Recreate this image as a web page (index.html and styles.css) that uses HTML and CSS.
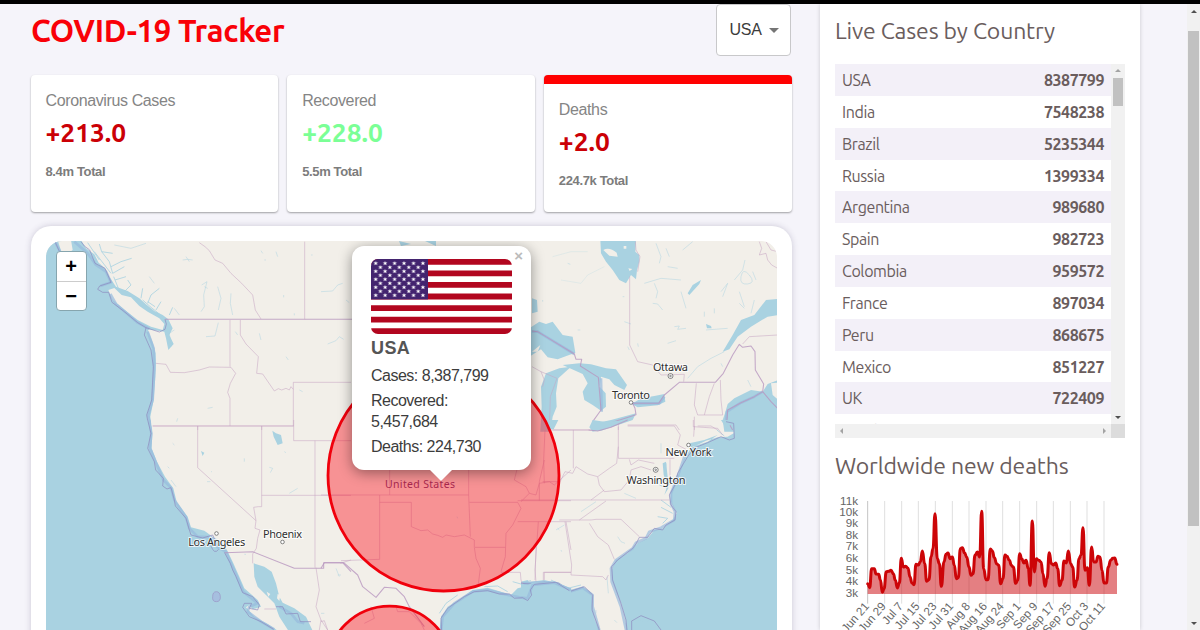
FILE: index.html
```html
<!DOCTYPE html>
<html lang="en">
<head>
<meta charset="utf-8">
<title>COVID-19 Tracker</title>
<link rel="stylesheet" href="styles.css">
</head>
<body>
<div class="app">
  <main class="left">
    <header class="header">
      <h1>COVID-19 Tracker</h1>
      <div class="select">USA <span class="caret"></span></div>
    </header>
    <section class="stats">
      <div class="stat"><p class="label">Coronavirus Cases</p><h2>+213.0</h2><p class="total">8.4m Total</p></div>
      <div class="stat"><p class="label">Recovered</p><h2 class="green">+228.0</h2><p class="total">5.5m Total</p></div>
      <div class="stat selected"><p class="label">Deaths</p><h2>+2.0</h2><p class="total">224.7k Total</p></div>
    </section>
    <section class="map-card">
      <div class="map">
        <svg class="tiles" viewBox="45 241 732 389" width="732" height="389">
          <rect x="45" y="241" width="732" height="389" fill="#f2efe9"/>
          <!-- Pacific north-west -->
          <g transform="translate(30 220) scale(.33333)">
            <path class="water" d="M45 60H150L165 85 190 103 203 128 222 145 235 170 245 185 255 200 290 213 325 235 345 253 370 273 395 285 412 298 425 325 415 345 428 372 412 390 405 355 400 335 350 328 366 370 374 400 375 430 373 470 368 540 358 590 362 635H45Z"/>
            <path class="land" d="M80 60H120L125 90 112 100 92 98ZM232 210 250 204 272 225 300 232 325 258 350 275 385 295 400 312 395 330 360 320 320 300 275 265 245 240Z"/>
            <path class="stream" stroke-width="7" d="M170 68 205 120M190 95 240 160M248 170 262 205M335 240 360 262 395 290M350 245 372 260"/>
            <path class="stream" d="M205 72 212 95 235 125 245 160M212 95 245 100M240 140 270 125 302 115M245 160 280 140M252 180 285 170M280 215 300 195 290 180M330 235 335 205M350 250 360 225 385 205M375 270 390 245M415 285 425 262"/>
            <path class="creek" d="M250 75 300 85 345 70M455 120 470 118 485 120M465 110 475 125M512 195 528 185 518 225 520 260 510 275M520 200 530 205M560 200 570 235 562 270M600 220 598 250 605 285M355 170 370 190M430 265 445 285M870 215 905 213 920 195 935 190M890 372 915 362 925 350 938 358M525 350 552 348 562 308M685 340 690 360M613 335 620 345M530 565 545 562M440 595 437 605M805 510 815 515M765 410 772 420M735 95 740 110M690 92 695 100M430 330 415 340 420 380M945 240 955 248M758 225V232M790 280V286M700 120H705M840 105H845"/>
            <path class="shelf" d="M72 65 90 100 110 110M130 65 170 100 195 135 225 155 240 187 208 198M238 222 255 252 320 308 355 327M350 335 368 385 370 450 365 540 352 585 358 630"/>
            <path class="edge" d="M72 65 86 96M150 65 160 78 176 90 192 130 222 145 240 187 206 198 200 208 215 217 233 217 243 247 280 275 320 308 345 323 385 336 402 328 406 312 402 298M345 323 340 345 360 390 367 440 362 540 347 585 355 630"/>
            <path class="border main" d="M402 298H970"/>
            <path class="border" d="M505 68 522 80 535 92 552 120 575 130 600 160 632 190 665 225 673 270 690 297M821 65V298M597 300V440M375 430 405 433 418 457 460 458 505 450 535 441 600 442 614 460 598 490 590 517 597 535V618M628 300V345L645 372 682 410 677 460 695 462 730 513 742 506 752 510 765 505 775 510 780 500 787 508M960 487H787V618M365 618H788M500 618V630M692 618V630"/>
          </g>
          <!-- Pacific south-west and Baja -->
          <g transform="translate(30 420) scale(.33333)">
            <path class="water" d="M45 0H357L364 40 362 85 378 125 402 170 427 205 437 245 470 290 480 322 520 332 545 350 570 365 588 390 605 425 625 470 640 505 680 540 690 560 665 568 655 555 645 562 670 590 710 612 740 632H45ZM668 430 700 440 722 455 735 490 745 530 755 548 790 565 825 590 845 632H772L745 590 730 550 705 525 680 500 670 470Z"/>
            <path class="land" d="M740 522 748 525 745 543 738 535ZM707 515 718 522 712 530Z"/>
            <path class="shelf" d="M355 0 361 40 357 85 375 128 397 180 420 203 430 240 465 292 475 325 500 350 540 352 560 382 585 395 600 430 620 475 637 515 680 550 655 560 650 575 690 605 730 628M745 560 780 580 800 605 820 610"/>
            <path class="edge" d="M350 0 360 40 350 85 370 125 374 150 397 175 395 198 408 207 420 203 430 240 433 258 465 295 475 330 480 345 515 354 545 345 552 360M540 378Q550 405 563 388M580 397 598 430 605 450 615 470 635 518 665 530 685 555 680 570 655 565 662 550 640 550 635 562 655 590 690 605 728 628M735 560 755 560 765 582 800 580 808 605 840 605"/>
            <path d="M545 530Q545 515 556 515T568 530 556 545 545 530Z" fill="#a6bfdf" stroke="#9a92c4" stroke-width="2"/>
            <path class="creek" d="M410 140 415 145M420 180 435 200M425 70 430 75M640 115V125M715 142 725 145 718 158M775 220 800 205M760 95 765 98M915 445 925 470M640 403H645M540 155H543M528 185H538"/>
            <path class="water" d="M724 32 735 40 750 45 755 70 740 75 728 50ZM510 93 520 98 515 108Z"/>
            <path class="border main" d="M582 398 665 395 790 445H878V428H935L960 455"/>
            <path class="border" d="M365 18H788M500 18V143L675 302M692 18V260H682L668 262 675 302 672 325 687 330 680 355 676 385 665 402M788 0V62H960M852 62V443M692 226H960M855 443 865 510 855 560 870 600 865 630M870 605 880 602 890 630M700 567H735M928 430 960 420M665 402V430"/>
          </g>
          <!-- Great Lakes, eastern Canada -->
          <g transform="translate(520 220) scale(.33333)">
            <path class="water" d="M238 60H345L343 95 355 105 355 125 348 150 345 178 330 165 315 190 295 180 275 150 255 125 240 100ZM25 325 55 305 75 312 95 305 125 345 155 350 163 398 130 410 110 418 80 412 60 388 25 410ZM60 500 75 460 115 445 150 440 112 475 105 520 107 560 95 590 88 635H58L62 560ZM125 435 175 430 210 433 255 445 285 448 318 495 310 510 280 495 265 478 240 470 236 500 254 520 255 560 240 572 215 555 190 540 185 515 200 490 185 462ZM332 552 360 535 400 528 430 522 433 545 410 556 350 562ZM210 625 225 610 270 600 345 580 335 600 300 612 240 632 215 632ZM770 237 735 240 700 285 660 300 635 345 605 395 625 388 650 350 690 320 740 290 772 285V237ZM772 480 740 492 725 515 690 510 640 535 620 552 612 580 605 600 610 635H772ZM33 235 48 240 50 275 33 280ZM500 220 515 195 540 180 535 192 505 225ZM555 312 570 318 572 325 558 325Z"/>
            <path class="land" d="M247 90Q265 80 287 98L290 110 265 107ZM750 490 772 488V540L755 525ZM33 395 58 375 50 395ZM308 78h8v8h-8ZM322 145l12 2-8 6Z"/>
            <path class="creek" d="M405 70 420 110 415 130M400 190 410 215 405 235M440 140 470 145M460 320 475 318 470 328 495 325M310 305 330 312M395 250 410 252 425 270M600 215 620 190 605 230M655 215 670 260M660 170Q655 195 680 192T685 165 660 170M695 155 705 180M610 395 570 415 530 440 500 475M370 190 420 175 480 180M555 330 620 325M485 90 515 65M480 215 495 265M435 85 445 110M655 250 670 265M700 240 690 280M65 240V245M140 130 148 133M320 380 325 390M170 330H178M305 230H310M550 275V290M580 265V280M440 370 465 362M640 180 665 150 672 120M350 370 352 380M680 480 690 500M600 430 605 440"/>
            <path class="creek faint" d="M250 140 200 165 180 190 120 180M95 110 150 95 200 95"/>
            <path class="shelf" stroke-width="4" d="M33 335 50 335 160 402M240 475 242 575M335 550H415L430 530M615 600 618 575 660 548 700 530 725 515"/>
            <path class="border main" d="M33 333 50 335 160 402 165 418 182 418 178 438 232 472 240 570 215 605 220 627 270 608 345 584 342 565 335 550H413L430 525 475 487H583L607 460 635 405 655 373 665 382 690 378 702 395 703 450 728 492 725 515 700 530 660 548 620 570 618 600 635 630M725 515 750 545 770 565"/>
            <path class="border" d="M715 65 722 85 715 105 735 100 740 120 752 135 770 145M735 65 750 90 770 95M326 170V375L350 425 395 435 420 465 490 463 488 485M343 65 345 90 357 110 350 155M665 372 685 350 770 345M526 490 520 555 530 585H605M550 585 565 530 580 490M598 480 600 540 605 585M292 600V630M320 615H465L475 630M520 630V590M33 440 60 455 70 480 65 500M60 455 108 475 88 530 85 630M90 630H210M530 618H570L590 630"/>
          </g>
          <!-- Atlantic seaboard -->
          <g transform="translate(520 420) scale(.33333)">
            <path class="water" d="M772 0H600L615 25 635 10 638 40 620 50 590 52 555 62 510 84 490 115 475 155 465 180 450 215 450 245 467 280 455 300 425 325 400 330 380 355 350 370 320 400 285 420 272 450 272 480 287 520 303 555 313 600 315 632H772ZM0 490 30 485 70 480 110 490 140 512 185 500 212 520 215 560 222 600 235 632H0ZM75 0H112L98 28 85 28ZM205 22 215 0 250 5 330 0 280 15 240 30 215 35ZM505 70 550 60 590 45 560 65 510 82ZM425 130 435 125 440 170 442 205 430 225 440 195 428 165ZM0 485 20 480 30 500 25 535 5 535Z"/>
            <path class="stream" stroke-width="5" d="M435 130 432 165 440 205M415 195 440 205M420 240 450 262M420 262 455 280M410 290 440 295 425 310M445 195 470 165M0 488 30 482M90 480 140 505 180 495M588 30 610 48"/>
            <path class="creek" d="M290 350 300 365 312 370M280 600 288 608M258 470 262 520M120 390 122 395M225 245 180 275M310 220 345 235M420 70V100M105 330 130 315M330 600 400 605M225 570V580"/>
            <path class="shelf" d="M490 110 470 170 450 220 450 250 462 275 460 300 420 323 385 335 375 355 345 368 335 385 285 420 270 445 272 485 300 560 315 630M0 490 70 487 110 490 145 515 185 503 215 525 215 560 235 630"/>
            <path class="edge" d="M615 5 638 10 640 55 625 60 600 50 560 68 520 84 500 110 488 130 470 160 462 195 445 225 450 255 465 275 462 300 435 315 425 330 400 325 380 352 355 352 345 372 335 385 290 420 272 440 275 480 300 550 315 600 318 630M0 490 35 492 70 487 115 490 145 515 190 500 215 525 213 570 235 630M332 630V603L360 587 400 603 420 630M0 535 25 535 35 495"/>
            <path class="border main" d="M203 30 230 33 270 22 320 0"/>
            <path class="border" d="M95 30H205M157 30V145M292 20V115H440L460 115M320 18H460L478 45 470 75 495 88M517 0V20L590 25 605 45M520 18 518 50M292 80 287 130 265 145 230 170 200 162 165 140 155 160 132 155 115 190M230 170 235 195 250 215 300 210 325 180 330 150 360 140 390 150M325 118 330 135 352 120 400 130M447 118V182M115 240H445M115 300H210L225 298H300L355 350M65 185 115 185M250 210 210 240M255 243 175 300M205 310 230 350 262 375 280 418M132 305 152 435 150 465 245 470 255 480 262 465M45 380 42 480M70 480V457H150M70 190 68 120 72 30M0 240H115"/>
          </g>
          <!-- Southern states and Gulf of Mexico -->
          <g transform="translate(320 460) scale(.33333)">
            <path class="water" d="M355 515 360 470 380 440 420 415 455 390 500 383 540 395 570 405 590 385 610 380 635 368 700 365 750 385V515Z"/>
            <path class="stream" stroke-width="5" d="M355 460 375 430 410 405M490 380 530 378 560 395M575 365 610 375M560 410 600 395"/>
            <path class="shelf" d="M360 515 365 470 400 430 455 395 500 390 540 400 595 412 620 415 635 375 700 368 750 390"/>
            <path class="edge" d="M362 515 360 475 380 445 430 410 460 395 500 392 535 402 565 402 580 415 605 413 620 422 632 405 628 390 640 373 705 367 745 392"/>
            <path class="border main" d="M0 325 10 308H68L110 345 125 380 165 412 190 382 225 385 250 410 265 440 310 500"/>
            <path class="border" d="M0 105H443M206 0V105M176 105V298L60 302M176 127H271V200L300 212 320 210 335 222 350 226 365 232 375 225 400 230 430 225 460 240V262L465 295 478 325 472 372M443 0V105L448 230M445 127H590L600 145 575 195 555 220 553 290 540 335M462 262H553M590 122H750M590 185H750M600 125 625 100 645 105 655 70 685 65 700 75 750 30M625 100 615 80 580 60 590 20 575 0M655 122V65L670 0M652 185 642 330 645 365M540 337H598L600 360 605 372M667 362V337H750M735 185 750 270M150 440 160 475 130 490M225 440 230 455 265 455 300 490 310 510M0 480 20 510"/>
            <path class="creek" d="M50 345H60M0 460H10M710 205 715 210M408 170 410 175"/>
          </g>
          <path class="water" d="M398 241 410 244 400 246ZM424 241H435V246Z"/>
          <g class="places">
            <circle cx="215.500" cy="533.500" r="1.800"/><circle cx="281.500" cy="542" r="1.800"/><circle cx="669.500" cy="376" r="2.500"/><circle cx="669.500" cy="376" r=".8"/><circle cx="630" cy="402.500" r="1.800"/><circle cx="687.500" cy="445" r="1.800"/><circle cx="654.700" cy="469.800" r="2.500"/><circle cx="654.700" cy="469.800" r=".8"/>
            <text x="215.700" y="546" textLength="57">Los Angeles</text>
            <text x="281.500" y="538" textLength="39">Phoenix</text>
            <text x="669.500" y="370.500" textLength="35">Ottawa</text>
            <text x="630" y="398.500" textLength="38">Toronto</text>
            <text x="687.500" y="456" textLength="46">New York</text>
            <text x="655" y="483.500" textLength="59">Washington</text>
            <text class="country" x="419" y="487.500" textLength="70">United States</text>
          </g>
          <circle class="ring" cx="442.500" cy="475.500" r="115.500"/>
          <circle class="ring" cx="388.700" cy="669" r="62.800"/>
        </svg>
        <div class="zoom-control"><span>+</span><span>−</span></div>
        <div class="popup">
          <span class="close">×</span>
          <svg class="flag" viewBox="0 0 140.500 75" width="140.500" height="75">
            <defs>
              <pattern id="stars" width="9.450" height="8" patternUnits="userSpaceOnUse">
                <path fill="#fff" d="M4.700 2 5.300 3.600H7L5.700 4.600 6.200 6.200 4.700 5.300 3.200 6.200 3.700 4.600 2.400 3.600H4.100Z"/>
              </pattern>
            </defs>
            <rect width="141" height="75" fill="#fff"/>
            <path stroke="#b2061f" stroke-width="5.770" d="M0 2.880H141M0 14.420H141M0 25.960H141M0 37.500H141M0 49.040H141M0 60.580H141M0 72.120H141"/>
            <rect width="57" height="40.400" fill="#43246f"/>
            <rect width="56.700" height="40" fill="url(#stars)"/>
            <rect width="47.250" height="32" fill="url(#stars)" transform="translate(4.720 4)"/>
          </svg>
          <h3>USA</h3>
          <p>Cases: 8,387,799</p>
          <p>Recovered: 5,457,684</p>
          <p>Deaths: 224,730</p>
        </div>
      </div>
    </section>
  </main>
  <aside class="right">
    <h2 class="live">Live Cases by Country</h2>
    <div class="table-box">
      <div class="rows">
        <div class="row"><span>USA</span><b>8387799</b></div>
        <div class="row"><span>India</span><b>7548238</b></div>
        <div class="row"><span>Brazil</span><b>5235344</b></div>
        <div class="row"><span>Russia</span><b>1399334</b></div>
        <div class="row"><span>Argentina</span><b>989680</b></div>
        <div class="row"><span>Spain</span><b>982723</b></div>
        <div class="row"><span>Colombia</span><b>959572</b></div>
        <div class="row"><span>France</span><b>897034</b></div>
        <div class="row"><span>Peru</span><b>868675</b></div>
        <div class="row"><span>Mexico</span><b>851227</b></div>
        <div class="row"><span>UK</span><b>722409</b></div>
        <div class="row"><span>South Africa</span></div>
      </div>
      <div class="vbar"><i class="up dim"></i><div class="thumb"></div><i class="down"></i></div>
      <div class="hbar"><i class="prev"></i><i class="next"></i></div>
      <div class="corner"></div>
    </div>
    <h2 class="deaths">Worldwide new deaths</h2>
    <svg class="chart" viewBox="45 140 900 430" width="300" height="143.333">
      <path stroke="#dfdfdf" stroke-width="3" d="M194 182V490M245 182V490M295 182V490M346 182V490M397 182V490M447 182V490M498 182V490M548 182V490M599 182V490M650 182V490M700 182V490M751 182V490M801 182V490M852 182V490"/>
      <path stroke="#c4c4c4" stroke-width="3" d="M143 182V490"/>
      <path fill="#cc0a10" fill-opacity=".52" id="area" d=""/>
      <path id="line" fill="none" stroke="#cc0508" stroke-width="9" stroke-linejoin="round" stroke-linecap="round" d=""/>
      <g class="yaxis">
        <text x="114" y="193">11k</text><text x="114" y="227">10k</text><text x="114" y="260">9k</text><text x="114" y="296">8k</text><text x="114" y="330">7k</text><text x="114" y="365">6k</text><text x="114" y="400">5k</text><text x="114" y="435">4k</text><text x="114" y="471">3k</text>
      </g>
      <g class="xaxis" id="dates"></g>
    </svg>
  </aside>
  <div class="page-bar"><i class="up"></i><div class="page-thumb"></div><i class="down"></i></div>
</div>
<script src="chart.js"></script>
</body>
</html>
```
FILE: chart.js
```js
// Daily deaths as chart coordinates, drawn as a smoothed line with an area below it.
const pts = [[143,430],[149,442],[155,385],[163,385],[168,401],[176,402],[181,418],[187,456],[192,445],[199,394],[206,393],[213,390],[220,400],[226,420],[232,443],[238,428],[244,354],[250,380],[257,378],[264,384],[270,410],[276,428],[282,433],[288,372],[295,374],[301,364],[307,332],[314,370],[320,423],[327,418],[333,350],[339,325],[345,220],[352,355],[358,370],[364,438],[372,365],[378,342],[384,338],[390,355],[397,350],[403,375],[409,415],[415,412],[421,325],[427,322],[434,338],[440,350],[447,380],[453,405],[459,400],[465,345],[472,335],[479,350],[485,213],[491,385],[498,418],[504,418],[511,326],[517,332],[523,352],[530,370],[536,375],[542,430],[549,415],[555,344],[561,348],[568,360],[574,375],[580,380],[587,429],[593,420],[599,340],[605,355],[612,368],[618,360],[625,385],[630,435],[637,242],[643,395],[649,355],[656,360],[663,365],[669,400],[675,438],[681,415],[688,337],[694,370],[701,374],[707,368],[713,385],[719,436],[726,420],[732,362],[739,368],[745,332],[752,370],[758,380],[764,440],[771,420],[777,355],[783,345],[789,262],[795,390],[802,382],[808,435],[815,320],[821,365],[828,365],[834,348],[840,350],[846,390],[852,428],[859,428],[865,380],[872,360],[878,354],[884,353],[891,372]];
let d = "M" + pts[0];
for (let i = 1; i < pts.length; i++) {
  const [x0, y0] = pts[i - 1], [x1, y1] = pts[i];
  const mx = (x0 + x1) / 2;
  d += `C${mx} ${y0} ${mx} ${y1} ${x1} ${y1}`;
}
document.getElementById("line").setAttribute("d", d);
document.getElementById("area").setAttribute("d", d + "V461H143Z");

const dates = ["Jun 21","Jun 29","Jul 7","Jul 15","Jul 23","Jul 31","Aug 8","Aug 16","Aug 24","Sep 1","Sep 9","Sep 17","Sep 25","Oct 3","Oct 11"];
document.getElementById("dates").innerHTML = dates.map((t, i) =>
  `<text transform="translate(${149 + i * 50.6} 499) rotate(-49)">${t}</text>`).join("");
```
FILE: styles.css
```css
* { box-sizing: border-box; margin: 0; padding: 0; }
body { width: 1200px; height: 630px; overflow: hidden; background: #f5f4fa; font-family: "Liberation Sans", Arial, sans-serif; }
.app { display: flex; height: 630px; border-top: 4px solid #000; padding-left: 30px; }
.left { width: 762px; }
.header { display: flex; justify-content: space-between; height: 71px; padding: 0 1px; }
.header h1 { font: 700 31px/53px Ubuntu, "Noto Sans", sans-serif; color: #f90007; letter-spacing: -.27px; white-space: nowrap; }
.select { display: flex; align-items: center; gap: 7px; width: 75px; height: 52px; padding-left: 12.500px; background: #fff; border: 1px solid #c8c8ca; border-radius: 4px; font-size: 16px; letter-spacing: -.3px; color: #3c3c3c; }
.caret { border: 5px solid transparent; border-top-color: #757575; border-bottom: 0; }
.stats { display: flex; gap: 9px; height: 136.500px; padding: 0 .5px; }
.stat { flex: 1; padding: 16px 15px 0; background: #fff; border-radius: 4px; box-shadow: 0 1px 2px rgba(0,0,0,.35); }
.stat.selected { border-top: 9.500px solid #f00; }
.label { font-size: 16px; line-height: 20px; letter-spacing: -.38px; color: #858585; }
.stat h2 { font: 700 26.300px/36px Ubuntu, "Noto Sans", sans-serif; margin-top: 3px; color: #cb0006; }
.stat h2.green { color: #7bff96; }
.total { margin-top: 12.500px; font-size: 13px; line-height: 18px; letter-spacing: -.36px; font-weight: 700; color: #7c7c7c; }
.map-card { margin: 14.500px 0 0 .5px; width: 761.500px; height: 430px; padding: 15px; background: #fff; border-radius: 20px; box-shadow: 0 0 7px -1px rgba(60,50,90,.3); }
.map { position: relative; width: 731px; height: 389px; overflow: hidden; border-radius: 16px 16px 0 0; }
.tiles { display: block; }
.water { fill: #a9d2e1; }
.land { fill: #f2efe9; }
.stream, .creek { fill: none; stroke: #a9d2e1; stroke-width: 2.500; stroke-linejoin: round; }
.creek { stroke-width: 2; opacity: .7; }
.creek.faint { opacity: .35; }
.shelf { fill: none; stroke: #98bbdd; stroke-width: 8; stroke-linejoin: round; opacity: .7; }
.edge { fill: none; stroke: #8d87bd; stroke-width: 2.500; stroke-linejoin: round; opacity: .8; }
.border { fill: none; stroke: #c6a4c3; stroke-width: 2; stroke-linejoin: round; opacity: .8; }
.border.main { stroke: #b896bf; stroke-width: 3.200; }
.places circle { fill: #fff; stroke: #555; stroke-width: .7; }
.places text { font: 11px "Noto Sans", sans-serif; fill: #2f2f2f; stroke: #fff; stroke-opacity: .75; stroke-width: 2; paint-order: stroke; text-anchor: middle; }
.places .country { fill: #6a3a72; font-size: 10.500px; stroke-opacity: .1; }
.ring { fill: #ff1020; fill-opacity: .42; stroke: #f0000c; stroke-width: 2.800; }
.zoom-control { position: absolute; left: 10px; top: 10px; display: flex; flex-direction: column; width: 31px; height: 60px; background: #fff; border: 1.500px solid #86a5ae; border-radius: 4px; overflow: hidden; }
.zoom-control span { flex: 1; font: 700 20px/28px "Liberation Sans", sans-serif; text-align: center; }
.zoom-control span + span { border-top: 1px solid #ccc; }
.popup { position: absolute; left: 306.500px; top: 5px; width: 179px; height: 224px; padding: 13px 19px; background: #fff; border-radius: 12px; box-shadow: 0 3px 14px rgba(0,0,0,.4); font-size: 16px; line-height: 21px; color: #3c3c3c; }
.popup::after { content: ""; position: absolute; left: 77px; top: 223px; border: 12px solid transparent; border-top-color: #fff; border-bottom: 0; }
.close { position: absolute; right: 8px; top: 1px; font: 700 15px/18px "Liberation Sans", sans-serif; color: #bbb; }
.flag { display: block; border-radius: 7px; }
.popup h3 { margin: 3px 0 5.500px; font-size: 18px; line-height: 22px; letter-spacing: .4px; color: #555; }
.popup p { margin-bottom: 4.300px; width: 130px; letter-spacing: -.5px; }
.right { width: 320px; margin-left: 28px; padding: 0 15px; background: #fff; box-shadow: 0 0 4px rgba(0,0,0,.18); font-family: Ubuntu, "Noto Sans", sans-serif; color: #6a5d5d; }
.right h2 { font-weight: 400; font-size: 23px; white-space: nowrap; }
.live { height: 60px; line-height: 54px; letter-spacing: -.15px; }
.table-box { display: grid; grid-template: 360px 14px / 276px 14px; }
.rows { overflow: hidden; font-size: 16px; }
.row { display: flex; justify-content: space-between; height: 31.850px; padding: 0 7px; line-height: 32px; letter-spacing: -.4px; }
.row:nth-child(odd) { background: #f3f0f8; }
.row:last-child { line-height: 35px; }
.row b { font-size: 16px; letter-spacing: -.45px; }
.vbar, .hbar { display: flex; align-items: center; justify-content: space-between; background: #f1f1f1; }
.vbar { flex-direction: column; padding: 5px 0; }
.hbar { padding: 0 5px; }
.corner { background: #dcdcdc; }
.thumb { width: 10px; height: 28px; margin: 6px 0 auto; background: #c1c1c1; }
i { display: block; border: 3.500px solid transparent; }
.up { border-bottom-color: #505050; border-top: 0; }
.up.dim { border-bottom-color: #a3a3a3; }
.down { border-top-color: #505050; border-bottom: 0; }
.prev { border-right-color: #a3a3a3; border-left: 0; }
.next { border-left-color: #a3a3a3; border-right: 0; }
.deaths { height: 48.700px; line-height: 55px; letter-spacing: -.15px; }
.chart { display: block; }
.yaxis text, .xaxis text { font: 35px "Liberation Sans", Arial, sans-serif; fill: #666; text-anchor: end; }
.page-bar { display: flex; flex-direction: column; align-items: center; width: 13px; margin-left: auto; padding: 6px 0 5px; background: #f1f1f1; }
.page-thumb { width: 10.500px; height: 495px; margin: 18px 0 auto; background: #c1c1c1; }
```
